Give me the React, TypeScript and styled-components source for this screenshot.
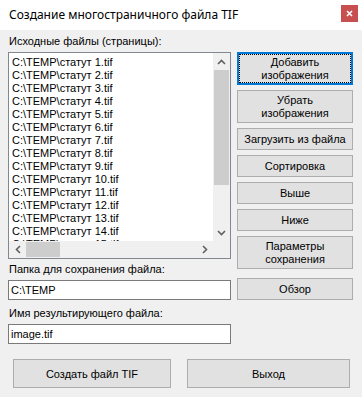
import React from 'react';
import styled, { createGlobalStyle } from 'styled-components';

const GlobalStyle = createGlobalStyle`
    html, body {
        margin: 0;
        padding: 0;
        background: #f0f0f0;
    }
    body {
        font-family: "Liberation Sans", Arial, sans-serif;
        font-size: 11px;
        color: #000;
    }
`;

const files = Array.from({ length: 15 }, (_, i) => `C:\\TEMP\\статут ${i + 1}.tif`);

const ChevronUp = () => (
    <svg width="9" height="6" viewBox="0 0 9 6">
        <path d="M1 5 L4.5 1.5 L8 5" fill="none" stroke="#606060" strokeWidth="1.6" />
    </svg>
);
const ChevronDown = () => (
    <svg width="9" height="6" viewBox="0 0 9 6">
        <path d="M1 1 L4.5 4.5 L8 1" fill="none" stroke="#606060" strokeWidth="1.6" />
    </svg>
);
const ChevronLeft = () => (
    <svg width="6" height="9" viewBox="0 0 6 9">
        <path d="M5 1 L1.5 4.5 L5 8" fill="none" stroke="#606060" strokeWidth="1.6" />
    </svg>
);
const ChevronRight = () => (
    <svg width="6" height="9" viewBox="0 0 6 9">
        <path d="M1 1 L4.5 4.5 L1 8" fill="none" stroke="#606060" strokeWidth="1.6" />
    </svg>
);

const App = () => {
    return <Window>
        <GlobalStyle />
        <TitleBar>
            <Title>Создание многостраничного файла TIF</Title>
            <CloseButton>
                <svg width="7" height="7" viewBox="0 0 7 7">
                    <path d="M1 1 L6 6 M6 1 L1 6" stroke="#fff" strokeWidth="1.6" />
                </svg>
            </CloseButton>
        </TitleBar>
        <Body>
            <Form>
                <Label>Исходные файлы (страницы):</Label>
                <ListBox>
                    <ListItems>
                        {files.map(f => <ListItem key={f}>{f}</ListItem>)}
                    </ListItems>
                    <VScroll>
                        <ArrowBox><ChevronUp /></ArrowBox>
                        <VTrack><VThumb /></VTrack>
                        <ArrowBox><ChevronDown /></ArrowBox>
                    </VScroll>
                    <HScroll>
                        <ArrowBox><ChevronLeft /></ArrowBox>
                        <HTrack><HThumb /></HTrack>
                        <ArrowBox><ChevronRight /></ArrowBox>
                    </HScroll>
                    <Corner />
                </ListBox>
                <ButtonStack>
                    <SideButton $tall $focused>Добавить<br />изображения</SideButton>
                    <SideButton $tall>Убрать<br />изображения</SideButton>
                    <SideButton>Загрузить из файла</SideButton>
                    <SideButton>Сортировка</SideButton>
                    <SideButton>Выше</SideButton>
                    <SideButton>Ниже</SideButton>
                    <SideButton $tall>Параметры<br />сохранения</SideButton>
                </ButtonStack>
                <Label>Папка для сохранения файла:</Label>
                <TextBox>C:\TEMP</TextBox>
                <SideButton>Обзор</SideButton>
                <Label>Имя результирующего файла:</Label>
                <TextBox>image.tif</TextBox>
            </Form>
            <Footer>
                <BigButton $width={158}>Создать файл TIF</BigButton>
                <BigButton $width={163}>Выход</BigButton>
            </Footer>
        </Body>
    </Window>;
};

export default App;

const Window = styled.div`
    width: 362px;
    height: 397px;
    background: #f0f0f0;
    overflow: hidden;
`;

const TitleBar = styled.div`
    height: 30px;
    background: #fff;
    display: flex;
    align-items: center;
    justify-content: space-between;
    padding: 0 4px 0 9px;
    box-sizing: border-box;
`;

const Title = styled.div`
    font-family: "Noto Sans", "Liberation Sans", sans-serif;
    font-size: 12px;
    color: #000;
    margin-top: -2px;
`;

const CloseButton = styled.div`
    width: 17px;
    height: 17px;
    background: #c74f4f;
    display: flex;
    align-items: center;
    justify-content: center;
    margin-top: -3px;
`;

const Body = styled.div`
    padding: 4px 0 0 8px;
`;

const Form = styled.div`
    display: grid;
    grid-template-columns: 223px 116px;
    grid-template-rows: 18px 207px 21px 20px 24px 20px;
    column-gap: 6px;
    align-items: end;
`;

const Label = styled.div`
    grid-column: 1;
    line-height: 13px;
    padding-left: 1px;
    padding-bottom: 4px;
    white-space: nowrap;
`;

const ListBox = styled.div`
    grid-column: 1;
    align-self: stretch;
    border: 1px solid #828790;
    background: #fff;
    display: grid;
    grid-template-columns: 1fr 17px;
    grid-template-rows: 1fr 17px;
    overflow: hidden;
`;

const ListItems = styled.div`
    padding: 3px 0 0 3px;
    overflow: hidden;
`;

const ListItem = styled.div`
    height: 13px;
    line-height: 13px;
    white-space: nowrap;
`;

const VScroll = styled.div`
    background: #f0f0f0;
    display: flex;
    flex-direction: column;
`;

const HScroll = styled.div`
    background: #f0f0f0;
    display: flex;
`;

const Corner = styled.div`
    background: #f0f0f0;
`;

const ArrowBox = styled.div`
    width: 17px;
    height: 17px;
    flex: none;
    display: flex;
    align-items: center;
    justify-content: center;
`;

const VTrack = styled.div`
    flex: 1;
    padding: 0 1px;
`;

const VThumb = styled.div`
    height: 115px;
    background: #cdcdcd;
`;

const HTrack = styled.div`
    flex: 1;
    padding: 1px 0;
    display: flex;
`;

const HThumb = styled.div`
    width: 34px;
    height: 15px;
    background: #cdcdcd;
`;

const ButtonStack = styled.div`
    grid-column: 2;
    grid-row: 2 / 4;
    align-self: start;
    display: flex;
    flex-direction: column;
    gap: 5px;
`;

const SideButton = styled.div<{ $tall?: boolean; $focused?: boolean }>`
    grid-column: 2;
    position: relative;
    height: ${p => (p.$tall ? 33 : 22)}px;
    box-sizing: border-box;
    background: #e1e1e1;
    border: 1px solid ${p => (p.$focused ? '#0078d7' : '#adadad')};
    box-shadow: ${p => (p.$focused ? 'inset 0 0 0 1px #0078d7' : 'none')};
    display: flex;
    align-items: center;
    justify-content: center;
    text-align: center;
    line-height: 13px;
    white-space: nowrap;

    &::after {
        content: '';
        display: ${p => (p.$focused ? 'block' : 'none')};
        position: absolute;
        inset: 1px;
        border: 1px dotted #000;
    }
`;

const TextBox = styled.div`
    grid-column: 1;
    height: 20px;
    box-sizing: border-box;
    border: 1px solid #7a7a7a;
    background: #fff;
    padding-left: 2px;
    line-height: 18px;
`;

const Footer = styled.div`
    display: flex;
    gap: 16px;
    padding: 15px 0 0 5px;
`;

const BigButton = styled.div<{ $width: number }>`
    width: ${p => p.$width}px;
    height: 29px;
    box-sizing: border-box;
    background: #e1e1e1;
    border: 1px solid #adadad;
    display: flex;
    align-items: center;
    justify-content: center;
`;
